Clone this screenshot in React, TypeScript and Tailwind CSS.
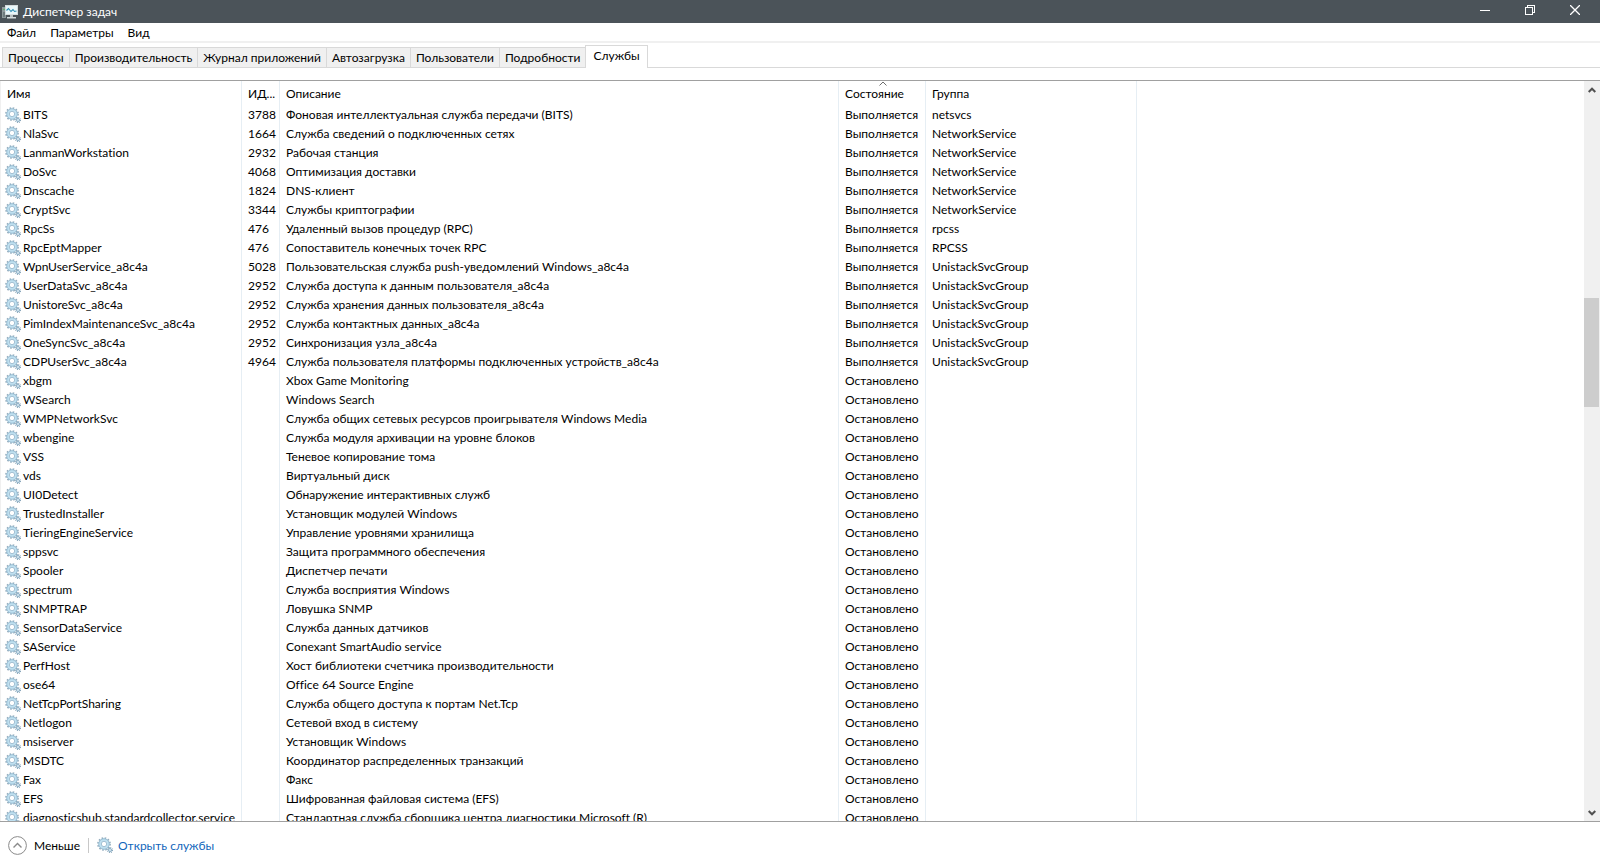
import { useState } from 'react';
import clsx from 'clsx';

interface Service {
  name: string;
  pid?: number;
  description: string;
  group?: string;
}

const menuItems = ['Файл', 'Параметры', 'Вид'];

const tabs = [
  'Процессы',
  'Производительность',
  'Журнал приложений',
  'Автозагрузка',
  'Пользователи',
  'Подробности',
  'Службы',
];

// Services that have a pid are running, the others are stopped
const services: Service[] = [
  { name: 'BITS', pid: 3788, description: 'Фоновая интеллектуальная служба передачи (BITS)', group: 'netsvcs' },
  { name: 'NlaSvc', pid: 1664, description: 'Служба сведений о подключенных сетях', group: 'NetworkService' },
  { name: 'LanmanWorkstation', pid: 2932, description: 'Рабочая станция', group: 'NetworkService' },
  { name: 'DoSvc', pid: 4068, description: 'Оптимизация доставки', group: 'NetworkService' },
  { name: 'Dnscache', pid: 1824, description: 'DNS-клиент', group: 'NetworkService' },
  { name: 'CryptSvc', pid: 3344, description: 'Службы криптографии', group: 'NetworkService' },
  { name: 'RpcSs', pid: 476, description: 'Удаленный вызов процедур (RPC)', group: 'rpcss' },
  { name: 'RpcEptMapper', pid: 476, description: 'Сопоставитель конечных точек RPC', group: 'RPCSS' },
  { name: 'WpnUserService_a8c4a', pid: 5028, description: 'Пользовательская служба push-уведомлений Windows_a8c4a', group: 'UnistackSvcGroup' },
  { name: 'UserDataSvc_a8c4a', pid: 2952, description: 'Служба доступа к данным пользователя_a8c4a', group: 'UnistackSvcGroup' },
  { name: 'UnistoreSvc_a8c4a', pid: 2952, description: 'Служба хранения данных пользователя_a8c4a', group: 'UnistackSvcGroup' },
  { name: 'PimIndexMaintenanceSvc_a8c4a', pid: 2952, description: 'Служба контактных данных_a8c4a', group: 'UnistackSvcGroup' },
  { name: 'OneSyncSvc_a8c4a', pid: 2952, description: 'Синхронизация узла_a8c4a', group: 'UnistackSvcGroup' },
  { name: 'CDPUserSvc_a8c4a', pid: 4964, description: 'Служба пользователя платформы подключенных устройств_a8c4a', group: 'UnistackSvcGroup' },
  { name: 'xbgm', description: 'Xbox Game Monitoring' },
  { name: 'WSearch', description: 'Windows Search' },
  { name: 'WMPNetworkSvc', description: 'Служба общих сетевых ресурсов проигрывателя Windows Media' },
  { name: 'wbengine', description: 'Служба модуля архивации на уровне блоков' },
  { name: 'VSS', description: 'Теневое копирование тома' },
  { name: 'vds', description: 'Виртуальный диск' },
  { name: 'UI0Detect', description: 'Обнаружение интерактивных служб' },
  { name: 'TrustedInstaller', description: 'Установщик модулей Windows' },
  { name: 'TieringEngineService', description: 'Управление уровнями хранилища' },
  { name: 'sppsvc', description: 'Защита программного обеспечения' },
  { name: 'Spooler', description: 'Диспетчер печати' },
  { name: 'spectrum', description: 'Служба восприятия Windows' },
  { name: 'SNMPTRAP', description: 'Ловушка SNMP' },
  { name: 'SensorDataService', description: 'Служба данных датчиков' },
  { name: 'SAService', description: 'Conexant SmartAudio service' },
  { name: 'PerfHost', description: 'Хост библиотеки счетчика производительности' },
  { name: 'ose64', description: 'Office 64 Source Engine' },
  { name: 'NetTcpPortSharing', description: 'Служба общего доступа к портам Net.Tcp' },
  { name: 'Netlogon', description: 'Сетевой вход в систему' },
  { name: 'msiserver', description: 'Установщик Windows' },
  { name: 'MSDTC', description: 'Координатор распределенных транзакций' },
  { name: 'Fax', description: 'Факс' },
  { name: 'EFS', description: 'Шифрованная файловая система (EFS)' },
  { name: 'diagnosticshub.standardcollector.service', description: 'Стандартная служба сборщика центра диагностики Microsoft (R)' },
];

function GearIcon() {
  return (
    <svg width="16" height="16" viewBox="0 0 16 16" fill="none" className="shrink-0" aria-hidden="true">
      <circle cx="7" cy="7" r="6.1" stroke="#8fa9bb" strokeWidth="1.5" strokeDasharray="1.6 1.59" />
      <circle cx="7" cy="7" r="4.1" stroke="#bfe0f0" strokeWidth="2.6" />
      <circle cx="7" cy="7" r="5.3" stroke="#8db4cc" strokeWidth="0.8" />
      <circle cx="7" cy="7" r="2.7" fill="#ffffff" stroke="#8cb0c8" strokeWidth="0.8" />
      <circle cx="13" cy="13" r="2.5" stroke="#87a5b9" strokeWidth="1.2" strokeDasharray="1 0.96" />
      <circle cx="13" cy="13" r="1.5" fill="#e8f2f8" stroke="#86adc5" strokeWidth="1" />
    </svg>
  );
}

function AppIcon() {
  return (
    <svg width="16" height="16" viewBox="0 0 16 16" aria-hidden="true">
      <rect x="0" y="3" width="4" height="11" fill="#8f9a9c" />
      <rect x="1" y="5" width="2" height="1" fill="#5fae6a" />
      <rect x="1" y="8" width="2" height="5" fill="#6f7b7e" />
      <rect x="3" y="1" width="13" height="10" fill="#d5dcde" />
      <rect x="4" y="2" width="11" height="8" fill="#e9f7fb" />
      <path d="M4.5 6.5 6.5 4.5 9 7.5 11 5.5 12.5 7.5 14.5 7" stroke="#2f8fb5" strokeWidth="1.1" fill="none" />
      <rect x="8" y="11" width="3" height="2" fill="#b9c1c3" />
      <rect x="5" y="13" width="9" height="1.5" fill="#d5dcde" />
    </svg>
  );
}

function TitleBar() {
  return (
    <header className="flex h-[23px] shrink-0 items-center bg-[#4b5359] pl-0.5 text-white">
      <AppIcon />
      <h1 className="flex-1 pl-[5px] text-[12px]">Диспетчер задач</h1>
      <button aria-label="Свернуть" className="flex h-5 w-[45px] items-center justify-center self-start">
        <svg width="10" height="10" viewBox="0 0 10 10" stroke="white" shapeRendering="crispEdges">
          <path d="M0 5.5H10" />
        </svg>
      </button>
      <button aria-label="Восстановить" className="flex h-5 w-[45px] items-center justify-center self-start">
        <svg width="10" height="10" viewBox="0 0 10 10" stroke="white" fill="none" shapeRendering="crispEdges">
          <path d="M.5 2.5H7.5V9.5H.5ZM2.5 2V.5H9.5V7.5H8" />
        </svg>
      </button>
      <button aria-label="Закрыть" className="mr-0.5 flex h-5 w-[46px] items-center justify-center self-start">
        <svg width="10" height="10" viewBox="0 0 10 10" stroke="white" strokeWidth="1.3">
          <path d="M0 0 10 10M10 0 0 10" />
        </svg>
      </button>
    </header>
  );
}

function ScrollBar() {
  return (
    <div className="flex w-4 shrink-0 flex-col bg-[#f0f0f0]" aria-hidden="true">
      <div className="flex h-[17px] items-center justify-center">
        <svg width="8" height="6" viewBox="0 0 8 6" stroke="#505050" strokeWidth="2" fill="none">
          <path d="M.7 5 4 1.7 7.3 5" />
        </svg>
      </div>
      <div className="flex-[200]" />
      <div className="mr-px h-[109px] bg-[#cdcdcd]" />
      <div className="flex-[397]" />
      <div className="flex h-[17px] items-center justify-center">
        <svg width="8" height="6" viewBox="0 0 8 6" stroke="#505050" strokeWidth="2" fill="none">
          <path d="M.7 1 4 4.3 7.3 1" />
        </svg>
      </div>
    </div>
  );
}

export default function App() {
  const [activeTab, setActiveTab] = useState('Службы');

  const cell = 'whitespace-nowrap border-r border-[#e6eef4] py-0 pr-0 text-left font-normal';

  return (
    <div className="flex h-screen flex-col overflow-hidden bg-white font-['Lato',sans-serif] text-[12px] leading-[19px] text-black [font-variant-ligatures:none]">
      <TitleBar />

      {/* Menu */}
      <nav className="flex h-5 shrink-0 items-center gap-3.5 border-b-2 border-[#f0f0f0] pl-[7px]">
        {menuItems.map((item) => (
          <button key={item}>{item}</button>
        ))}
      </nav>

      {/* Tabs */}
      <div role="tablist" className="flex h-[25px] shrink-0 items-end border-b border-[#d9d9d9] pl-0.5">
        {tabs.map((tab) => (
          <button
            key={tab}
            role="tab"
            aria-selected={tab === activeTab}
            onClick={() => setActiveTab(tab)}
            className={clsx(
              'border border-b-0 border-[#d9d9d9]',
              tab === activeTab
                ? '-mb-px h-[23px] bg-white px-[7px] pb-1'
                : 'h-5 border-r-0 bg-[#f0f0f0] px-[5px]',
            )}
          >
            {tab}
          </button>
        ))}
      </div>

      {/* Service list */}
      <main className="mt-3 flex min-h-0 flex-1 border-y border-[#a0a0a0]">
        <div className="flex-1 overflow-hidden border-l border-[#f0f0f0]">
          <table className="w-full table-fixed border-separate border-spacing-0">
            <colgroup>
              <col className="w-[241px]" />
              <col className="w-[38px]" />
              <col className="w-[559px]" />
              <col className="w-[87px]" />
              <col className="w-[211px]" />
              <col />
            </colgroup>
            <thead>
              <tr className="h-6">
                <th className={clsx(cell, 'pl-1.5')}>Имя</th>
                <th className={clsx(cell, 'pl-1.5')}>ИД...</th>
                <th className={clsx(cell, 'pl-1.5')}>Описание</th>
                <th className={clsx(cell, 'relative pl-1.5')} aria-sort="ascending">
                  <svg className="absolute top-0 left-10" width="8" height="5" viewBox="0 0 8 5" stroke="#6d6d6d" fill="none">
                    <path d="M.5 4.5 4 1 7.5 4.5" />
                  </svg>
                  Состояние
                </th>
                <th className={clsx(cell, 'pl-1.5')}>Группа</th>
                <td />
              </tr>
            </thead>
            <tbody>
              {services.map((service) => (
                <tr key={service.name} className="h-[19px]">
                  <td className={clsx(cell, 'pl-1')}>
                    <div className="flex items-center gap-0.5">
                      <GearIcon />
                      <span>{service.name}</span>
                    </div>
                  </td>
                  <td className={clsx(cell, 'pl-1.5')}>{service.pid}</td>
                  <td className={clsx(cell, 'pl-1.5')}>{service.description}</td>
                  <td className={clsx(cell, 'pl-1.5')}>{service.pid ? 'Выполняется' : 'Остановлено'}</td>
                  <td className={clsx(cell, 'pl-1.5')}>{service.group}</td>
                  <td />
                </tr>
              ))}
            </tbody>
          </table>
        </div>
        <ScrollBar />
      </main>

      {/* Footer */}
      <footer className="flex h-[46px] shrink-0 items-center pl-2">
        <button className="flex items-center gap-[7px]">
          <svg width="19" height="19" viewBox="0 0 19 19" stroke="#8a8a8a" fill="none">
            <circle cx="9.5" cy="9.5" r="8.9" />
            <path d="M5.5 11.5 9.5 7.5 13.5 11.5" strokeWidth="1.4" />
          </svg>
          Меньше
        </button>
        <div className="mx-2 h-[15px] w-px bg-[#c8c8c8]" />
        <a href="#services" className="flex items-center gap-[5px] text-[#1166bb]">
          <GearIcon />
          Открыть службы
        </a>
      </footer>
    </div>
  );
}
